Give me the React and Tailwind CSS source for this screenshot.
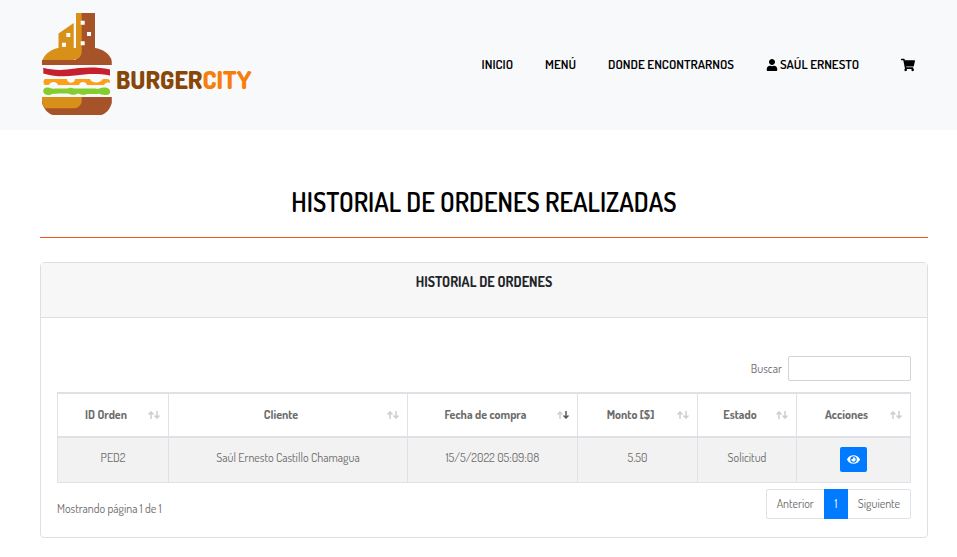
import { FaEye, FaShoppingCart, FaUser } from "react-icons/fa";

const columns = [
  { label: "ID Orden", width: "w-[111px]" },
  { label: "Cliente", width: "" },
  { label: "Fecha de compra", width: "w-[170px]", sorted: true },
  { label: "Monto [$]", width: "w-[120px]" },
  { label: "Estado", width: "w-[99px]" },
  { label: "Acciones", width: "w-[114px]" },
];

const orders = [
  { id: "PED2", client: "Saúl Ernesto Castillo Chamagua", date: "15/5/2022 05:09:08", amount: "5.50", status: "Solicitud" },
];

function Logo() {
  return (
    <a href="#inicio" className="flex items-center gap-1" aria-label="BurgerCity">
      <svg viewBox="0 0 72 104" className="h-[104px] w-[72px]" aria-hidden="true">
        <path fill="#a65329" d="M36 0H55V35C63 36 69 41 71.300 46Q72 49 71.800 52H2V47H36Z" />
        <path fill="#d99018" d="M36 0H41.700V38C41.700 43.500 38.500 47 33 47H2.500C5 41 11 36 18.500 35V20.500L33.700 10V35H36Z" />
        <path fill="#ffffff" d="M40.700 7.700h4v4h-4ZM47 19h4v4h-4ZM40.700 28.300h4v4h-4ZM26.300 20h4v4h-4ZM22 29.700h4v4h-4Z" />
        <path fill="#c6202e" d="M3.300 54.700C10 56.500 18 57.500 27 56.500 42 54.500 55 53.500 70 56.500V62.500C57 60 46 61 35 62.500 24 64 14 63.500 3.300 60.500Z" />
        <path fill="#fca017" d="M5 66H27C27 71 35 71 35 66H50C51 70 60 71 63 66H68C70 67 70 68 70 70 67 69 65 70 64 72H47C46 68 40 68 39 72H18C17 68 10 68 9 72H5C3 71 3 67 5 66Z" />
        <path fill="#84cd2c" d="M7 74.500C10 74 12 76.500 15 75.500H28C30 74 32 75.500 34 75.500H55C58 76.500 60 75 64 74.500 72 74 72 82.500 66 82 62 82.500 60 80 57 81H47C43 83 40 81 38 80.500 34 82.500 32 82 28 80.500H18C15 81 13 80 10 82 1.500 83 1.500 74.500 7 74.500Z" />
        <path fill="#a65329" d="M2 84H71.800V90C70 96 66 101 61 102H13C8 101 4 96 2 90Z" />
        <path fill="#d99018" d="M2 84H41.700V87C41.700 92 38.500 95.300 33 95.300H5Q2 91 2 88Z" />
      </svg>
      <span className="pt-7 text-[25px] leading-8 font-extrabold text-[#874708]">
        BURGER<span className="text-[#f77e0b]">CITY</span>
      </span>
    </a>
  );
}

function SortArrows({ sorted }) {
  return (
    <svg viewBox="0 0 12 8" className="h-2 w-3 shrink-0" fill="none" strokeWidth="1.500" aria-hidden="true">
      <path stroke="#cdced0" d="M3 8V1M.500 3.500L3 1l2.500 2.500" />
      <path stroke={sorted ? "#55585c" : "#cdced0"} d="M9 0v7M6.500 4.500L9 7l2.500-2.500" />
    </svg>
  );
}

export default function App() {
  return (
    <div className="min-h-screen bg-white font-['Dosis','Roboto',sans-serif] text-xs text-[#6c6c6c]">
      <header className="flex items-center justify-between bg-[#f8f9fb] py-[13px] pr-[42px] pl-10">
        <Logo />
        <nav className="flex items-center gap-8 text-[13px] font-semibold text-black">
          <a href="#inicio">INICIO</a>
          <a href="#menu">MENÚ</a>
          <a href="#donde">DONDE ENCONTRARNOS</a>
          <a href="#cuenta" className="flex items-center gap-0.5">
            <FaUser className="size-3" />
            SAÚL ERNESTO
          </a>
          <a href="#carrito" aria-label="Carrito" className="ml-2.5">
            <FaShoppingCart className="size-3.5" />
          </a>
        </nav>
      </header>

      <main className="pt-14 pr-[29px] pb-5 pl-10">
        <h1 className="text-center text-[26px] leading-8 font-semibold text-black">HISTORIAL DE ORDENES REALIZADAS</h1>
        <hr className="mt-[19px] mb-6 border-[#f4511e]" />

        <section className="rounded border border-[#dfdfdf]">
          <h2 className="border-b border-[#dfdfdf] bg-[#f7f7f7] pt-2.5 pb-[26px] text-center text-sm leading-[18px] font-bold text-[#212529]">
            HISTORIAL DE ORDENES
          </h2>
          <div className="px-4 pt-[38px] pb-[18px]">
            <div className="flex items-center justify-end gap-1.5">
              <label htmlFor="buscar">Buscar</label>
              <input id="buscar" type="search" className="h-[25px] w-[123px] rounded-xs border border-[#ced4da] bg-white px-2" />
            </div>

            <table className="mt-[11px] w-full table-fixed border-collapse border border-[#dee2e6] text-center">
              <thead>
                <tr className="h-11">
                  {columns.map((c) => (
                    <th key={c.label} className={`border border-y-2 border-[#dee2e6] pr-2 pl-1.5 font-bold ${c.width}`}>
                      <span className="flex items-center">
                        <span className="grow whitespace-nowrap">{c.label}</span>
                        <SortArrows sorted={c.sorted} />
                      </span>
                    </th>
                  ))}
                </tr>
              </thead>
              <tbody>
                {orders.map((o) => (
                  <tr key={o.id} className="h-[45px] bg-[#f2f2f2] align-top leading-[18px] *:border *:border-[#dee2e6] *:pt-[11px]">
                    <td>{o.id}</td>
                    <td>{o.client}</td>
                    <td>{o.date}</td>
                    <td>{o.amount}</td>
                    <td>{o.status}</td>
                    <td>
                      <button type="button" aria-label="Ver orden" className="-mt-0.5 inline-flex h-[25px] w-[27px] items-center justify-center rounded-xs bg-[#007bff] text-white">
                        <FaEye className="size-[13px]" />
                      </button>
                    </td>
                  </tr>
                ))}
              </tbody>
            </table>

            <div className="mt-1.5 flex items-center justify-between">
              <p className="pt-2.5">Mostrando página 1 de 1</p>
              <div className="flex h-[30px] items-stretch rounded-xs border border-[#dee2e6]">
                <button type="button" className="px-2.5">Anterior</button>
                <button type="button" aria-current="page" className="-my-px w-6 bg-[#007bff] text-white">1</button>
                <button type="button" className="px-2.5">Siguiente</button>
              </div>
            </div>
          </div>
        </section>
      </main>
    </div>
  );
}
